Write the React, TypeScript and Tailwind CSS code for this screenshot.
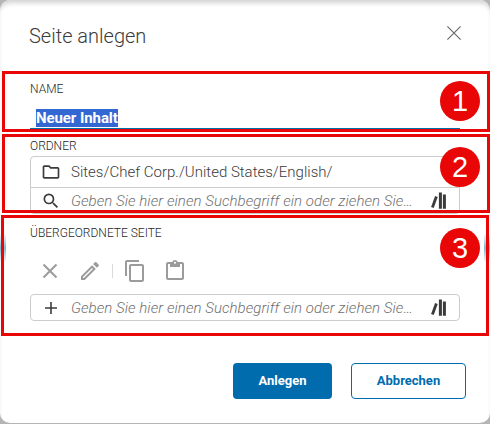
import React from "react";

function Books() {
  return (
    <svg width="17" height="18" viewBox="0 0 17 18" fill="none" stroke="#3b3b3b" className="shrink-0">
      <path d="M2.4 15.4 6.4 4.4" strokeWidth="2.8" />
      <path d="M10.4 .6v16.2M14.4 2.4v14.4" strokeWidth="3" />
    </svg>
  );
}

function Label({ children }: { children: React.ReactNode }) {
  return <div className="h-4 text-[12px] leading-4 font-light text-[#1f1f1f]">{children}</div>;
}

function SearchRow({ icon }: { icon: React.ReactNode }) {
  return (
    <div className="flex flex-1 items-center pt-px pr-[12px] pl-[10px]">
      <span className="flex w-5 shrink-0 justify-center">{icon}</span>
      <span className="ml-[10px] w-[347px] truncate text-[15px] font-light tracking-[0.06px] text-[#6f6f6f] italic">
        Geben Sie hier einen Suchbegriff ein oder ziehen Sie…
      </span>
      <span className="ml-auto"><Books /></span>
    </div>
  );
}

function Badge({ n, className }: { n: string; className: string }) {
  return (
    <div className={`absolute left-[440px] flex h-10 w-10 items-center justify-center rounded-full bg-[#e90606] font-['Liberation_Sans',Arial,sans-serif] text-[29px] leading-none text-white ${className}`}>
      {n}
    </div>
  );
}

export default function App() {
  return (
    <div className="relative h-[424px] w-[490px] overflow-hidden bg-[#b5b5b5] font-[Roboto,sans-serif] text-[#3b3b3b]">
      <div className="flex h-[423px] flex-col rounded-[10px] bg-white pr-[30px] pl-[30px] shadow-[inset_0_5px_5px_-2px_#d2d2d2]">
        <div className="mt-[24px] flex h-6 items-start justify-between">
          <h1 className="-ml-px text-[20px] leading-6 font-light">Seite anlegen</h1>
          <svg width="14" height="14" viewBox="0 0 14 14" className="mt-[2px] -mr-[1px]" stroke="#666" strokeWidth="1.1">
            <path d="M.4.4 13.6 13.6M13.6.4.4 13.6" />
          </svg>
        </div>
        <div className="mt-[33px]"><Label>NAME</Label></div>
        <div className="mt-2 flex h-[25px] items-start border-b-2 border-[#006cae] pt-[4px] pl-[6px]">
          <span className="h-[18px] bg-[#3367d1] text-[15px] leading-[18px] font-bold tracking-[-0.08px] text-white">Neuer Inhalt</span>
        </div>
        <div className="mt-[8px]"><Label>ORDNER</Label></div>
        <div className="mt-[2px] flex h-[58px] flex-col rounded-[4px] border border-[#ccc]">
          <div className="flex h-[31px] items-center border-b border-[#ccc] pl-[10px]">
            <svg width="20" height="20" viewBox="0 0 24 24" fill="#3b3b3b"><path d="M9.17 6l2 2H20v10H4V6h5.17M10 4H4c-1.1 0-1.99.9-1.99 2L2 18c0 1.1.9 2 2 2h16c1.1 0 2-.9 2-2V8c0-1.1-.9-2-2-2h-8l-2-2z" /></svg>
            <span className="ml-[10px] text-[15px] font-light">Sites/Chef Corp./United States/English/</span>
          </div>
          <SearchRow icon={<svg width="20" height="20" viewBox="0 0 24 24" fill="#3b3b3b"><path d="M15.5 14h-.79l-.28-.27A6.47 6.47 0 0 0 16 9.5 6.5 6.5 0 1 0 9.5 16c1.61 0 3.09-.59 4.23-1.57l.27.28v.79l5 4.99L20.49 19l-4.99-5zm-6 0C7.01 14 5 11.99 5 9.5S7.01 5 9.5 5 14 7.01 14 9.5 11.99 14 9.5 14z" /></svg>} />
        </div>
        <div className="mt-[11px]"><Label>ÜBERGEORDNETE SEITE</Label></div>
        <div className="mt-[18px] flex h-6 items-center pl-[8px] text-[#9b9b9b]">
          <svg width="24" height="24" viewBox="0 0 24 24" fill="none" stroke="currentColor" strokeWidth="2"><path d="m5.5 5.5 13 13M18.5 5.5l-13 13" /></svg>
          <svg className="ml-4" width="24" height="24" viewBox="0 0 24 24" fill="currentColor"><path d="M14.06 9.02l.92.92L5.92 19H5v-.92l9.06-9.06M17.66 3c-.25 0-.51.1-.7.29l-1.83 1.83 3.75 3.75 1.83-1.83c.39-.39.39-1.02 0-1.41l-2.34-2.34c-.2-.2-.45-.29-.71-.29zm-3.6 3.19L3 17.25V21h3.75L17.81 9.94l-3.75-3.75z" /></svg>
          <div className="ml-[10px] h-[14px] w-px bg-[#d9d9d9]" />
          <svg className="ml-[10px]" width="24" height="24" viewBox="0 0 24 24" fill="currentColor"><path d="M16 1H4c-1.1 0-2 .9-2 2v14h2V3h12V1zm3 4H8c-1.1 0-2 .9-2 2v14c0 1.1.9 2 2 2h11c1.1 0 2-.9 2-2V7c0-1.1-.9-2-2-2zm0 16H8V7h11v14z" /></svg>
          <svg className="-mt-[2px] ml-4" width="24" height="24" viewBox="0 0 24 24" fill="currentColor"><path d="M19 4h-4.18C14.4 2.84 13.3 2 12 2s-2.4.84-2.82 2H5c-1.1 0-2 .9-2 2v14c0 1.1.9 2 2 2h14c1.1 0 2-.9 2-2V6c0-1.1-.9-2-2-2zm-7-.3c.55 0 1 .45 1 1s-.45 1-1 1-1-.45-1-1 .45-1 1-1zM19 20H5V6h2v3h10V6h2v14z" /></svg>
        </div>
        <div className="mt-[11px] flex h-[27px] rounded-[4px] border border-[#ccc]">
          <SearchRow icon={<svg width="12" height="12" viewBox="0 0 12 12" stroke="#3b3b3b" strokeWidth="1.6"><path d="M6 0v12M0 6h12" /></svg>} />
        </div>
        <div className="mt-[42px] -mr-[6px] flex justify-end gap-[19px] text-[13px] font-bold">
          <button className="h-9 w-[99px] rounded-[4px] bg-[#006cae] text-white">Anlegen</button>
          <button className="h-9 w-[115px] rounded-[4px] border border-[#006cae] bg-white text-[#006cae]">Abbrechen</button>
        </div>
      </div>
      <div className="absolute top-[233px] left-0 h-[30px] w-[6px] bg-linear-to-b from-white via-[#7dbad3] to-white" />
      <div className="absolute top-[233px] right-0 h-[30px] w-[6px] bg-linear-to-b from-white via-[#7dbad3] to-white" />
      <div className="absolute top-[71px] left-[2px] h-[61px] w-[488px] border-3 border-[#e90606]" />
      <div className="absolute top-[134px] left-[2px] h-[79px] w-[488px] border-3 border-[#e90606]" />
      <div className="absolute top-[215px] left-[1px] h-[121px] w-[488px] border-3 border-[#e90606]" />
      <Badge n="1" className="top-[81px]" />
      <Badge n="2" className="top-[147px]" />
      <Badge n="3" className="top-[228px]" />
    </div>
  );
}
